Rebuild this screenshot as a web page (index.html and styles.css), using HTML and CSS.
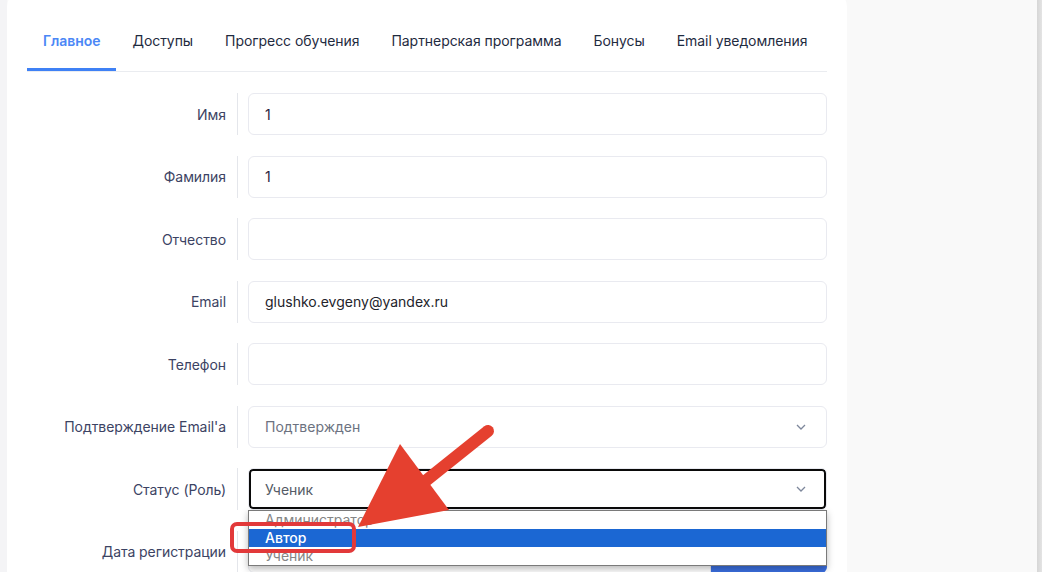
FILE: index.html
```html
<!DOCTYPE html>
<html lang="ru">
<head>
    <meta charset="UTF-8">
    <meta name="viewport" content="width=device-width, initial-scale=1.0">
    <title>Профиль пользователя</title>
    <link rel="stylesheet" href="styles.css">
</head>
<body>
    <div class="page">
        <main class="card">
            <nav class="tabs">
                <a class="tab active">Главное</a>
                <a class="tab">Доступы</a>
                <a class="tab">Прогресс обучения</a>
                <a class="tab">Партнерская программа</a>
                <a class="tab">Бонусы</a>
                <a class="tab">Email уведомления</a>
            </nav>

            <form class="profile-form">
                <div class="form-row">
                    <label class="form-label">Имя</label>
                    <div class="form-field"><input class="input" type="text" value="1"></div>
                </div>
                <div class="form-row">
                    <label class="form-label">Фамилия</label>
                    <div class="form-field"><input class="input" type="text" value="1"></div>
                </div>
                <div class="form-row">
                    <label class="form-label">Отчество</label>
                    <div class="form-field"><input class="input" type="text" value=""></div>
                </div>
                <div class="form-row">
                    <label class="form-label">Email</label>
                    <div class="form-field"><input class="input input-email" type="text" value="glushko.evgeny@yandex.ru"></div>
                </div>
                <div class="form-row">
                    <label class="form-label">Телефон</label>
                    <div class="form-field"><input class="input" type="text" value=""></div>
                </div>
                <div class="form-row">
                    <label class="form-label">Подтверждение Email'a</label>
                    <div class="form-field">
                        <div class="select">
                            <span>Подтвержден</span>
                            <svg class="chevron" width="10" height="6" viewBox="0 0 10 6"><path d="M1 1l4 4 4-4" fill="none" stroke="#7d879b" stroke-width="1.3"/></svg>
                        </div>
                    </div>
                </div>
                <div class="form-row">
                    <label class="form-label">Статус (Роль)</label>
                    <div class="form-field">
                        <div class="select focused">
                            <span>Ученик</span>
                            <svg class="chevron" width="10" height="6" viewBox="0 0 10 6"><path d="M1 1l4 4 4-4" fill="none" stroke="#7d879b" stroke-width="1.3"/></svg>
                        </div>
                        <ul class="dropdown">
                            <li class="option">Администратор</li>
                            <li class="option selected">Автор</li>
                            <li class="option">Ученик</li>
                        </ul>
                    </div>
                </div>
                <div class="form-row">
                    <label class="form-label">Дата регистрации</label>
                    <div class="form-field date-field">
                        <input class="input date-input" type="text" value="">
                        <button class="date-btn" type="button"></button>
                    </div>
                </div>
            </form>
        </main>
        <div class="scrollbar"></div>
    </div>

    <!-- annotation overlay -->
    <svg class="annotation" width="1042" height="572" viewBox="0 0 1042 572">
        <rect x="232" y="524" width="122" height="27" rx="5" fill="none" stroke="#e2393a" stroke-width="4"/>
        <line x1="488" y1="431" x2="418" y2="487" stroke="#e5402f" stroke-width="12" stroke-linecap="round"/>
        <polygon points="400,444 449,510 358,527" fill="#e5402f"/>
    </svg>
</body>
</html>
```

FILE: styles.css
```css
* {
    margin: 0;
    padding: 0;
    box-sizing: border-box;
    font-family: Inter, "Noto Sans", Arial, sans-serif;
}

body {
    background-color: #f9f9f9;
    overflow: hidden;
    height: 572px;
    position: relative;
}

.page {
    display: flex;
    height: 572px;
    background: linear-gradient(to right, #f4f4f6 0, #f4f4f6 7px, #f9f9f9 7px);
}

.card {
    width: 840px;
    flex-shrink: 0;
    margin-left: 7px;
    margin-top: -9px;
    padding: 23px 20px 0;
    background-color: #ffffff;
    border-radius: 16px 16px 0 0;
    height: 600px;
}

.scrollbar {
    margin-left: auto;
    width: 5px;
    background: linear-gradient(to right, #d6d6d6, #e4e4e4);
}

/* tabs */
.tabs {
    display: flex;
    border-bottom: 1px solid #eaecf0;
}

.tab {
    padding: 17px 16px;
    font-size: 14px;
    line-height: 20px;
    letter-spacing: -0.06px;
    color: #1f2b3f;
    white-space: nowrap;
    flex-shrink: 0;
    border-bottom: 3px solid transparent;
    cursor: pointer;
}

.tab.active {
    color: #4b87f6;
    font-weight: 600;
    border-bottom-color: #3f81f5;
}

/* form */
.profile-form {
    margin-top: 21px;
    display: flex;
    flex-direction: column;
    gap: 20.5px;
}

.form-row {
    display: flex;
    height: 42px;
}

.form-label {
    width: 211px;
    flex-shrink: 0;
    padding-right: 11px;
    border-right: 1px solid #e4e6eb;
    display: flex;
    align-items: center;
    justify-content: flex-end;
    font-size: 14px;
    letter-spacing: -0.06px;
    color: #3c4363;
    white-space: nowrap;
}

.form-field {
    flex: 1;
    margin-left: 10px;
    position: relative;
}

.input {
    width: 100%;
    height: 42px;
    border: 1px solid #e9eaf0;
    border-radius: 6px;
    padding: 0 16px;
    font-size: 14px;
    color: #2b1e3e;
    background: #fff;
    outline: none;
}

.input-email {
    color: #23232b;
}

.select {
    height: 42px;
    border: 1px solid #e9eaf0;
    border-radius: 6px;
    padding: 0 20px 0 16px;
    display: flex;
    align-items: center;
    justify-content: space-between;
    font-size: 14px;
    color: #6c7280;
}

.select.focused {
    box-shadow: inset 0 0 0 2px #0a0a0a;
    border-radius: 5px;
    color: #555b66;
}

.chevron {
    display: block;
}

.dropdown {
    position: absolute;
    top: 42px;
    left: 0;
    right: 0;
    list-style: none;
    background: #fff;
    border: 1px solid #7a7a7a;
    box-shadow: 0 3px 7px rgba(0, 0, 0, 0.28);
    z-index: 5;
}

.option {
    height: 18px;
    line-height: 18px;
    padding-left: 16px;
    font-size: 14px;
    color: #858585;
}

.option.selected {
    background-color: #1b67d3;
    color: #ffffff;
    font-weight: 500;
}

.date-field {
    display: flex;
}

.date-input {
    flex: 1;
    border-radius: 6px 0 0 6px;
}

.date-btn {
    width: 116px;
    border: none;
    background-color: #3b6fe0;
    border-radius: 0 6px 6px 0;
}

.annotation {
    position: absolute;
    left: 0;
    top: 0;
    z-index: 10;
    pointer-events: none;
}
```
